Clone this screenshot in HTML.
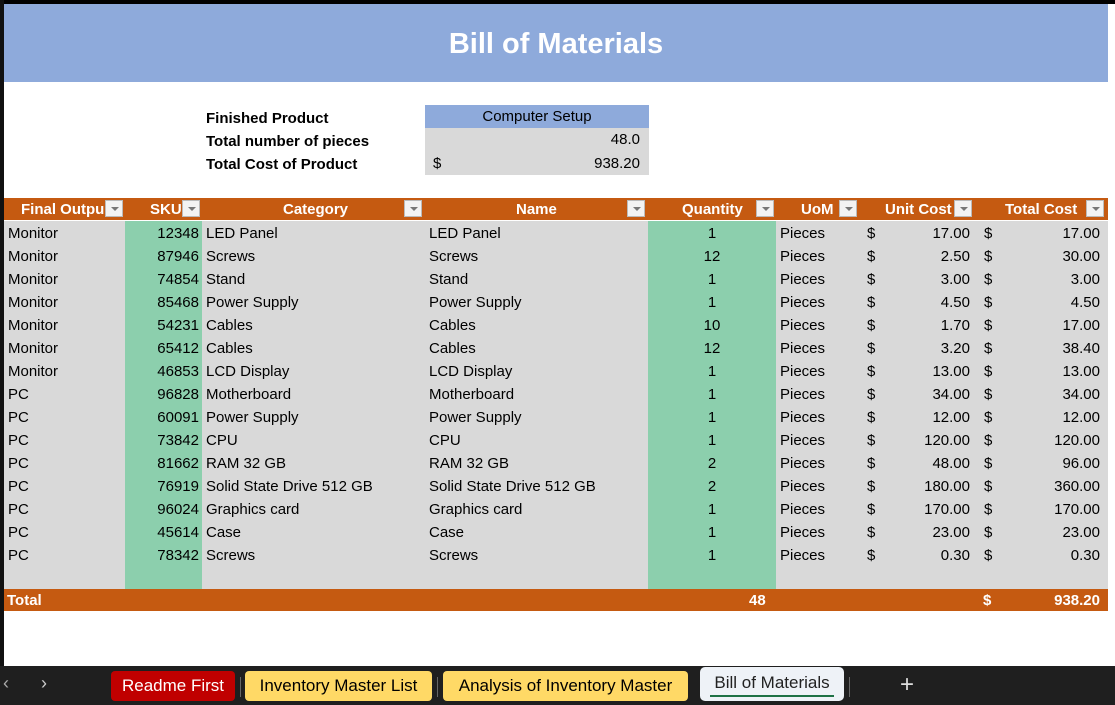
<!DOCTYPE html><html><head><style>
*{margin:0;padding:0;box-sizing:border-box}
body{width:1115px;height:705px;background:#fff;font-family:"Liberation Sans",sans-serif;position:relative;overflow:hidden;font-size:15px;color:#000}
.a{position:absolute}
.hdr{top:198px;height:22px;background:#c55a11;color:#fff;font-weight:bold;line-height:23px}
.dd{position:absolute;top:2px;width:18px;height:17px;background:#f3f3f3;border:1px solid #bbb}
.dd:after{content:"";position:absolute;left:5px;top:6px;border-left:4px solid transparent;border-right:4px solid transparent;border-top:4px solid #777}
.row{position:absolute;left:4px;width:1104px;height:23px;line-height:25px}
.c{position:absolute;top:0;white-space:nowrap}
.tab{position:absolute;top:671px;height:30px;line-height:30px;font-size:17px;text-align:center;border-radius:4px}
</style></head><body>
<div class="a" style="left:0;top:0;width:1115px;height:4px;background:#000"></div>
<div class="a" style="left:0;top:0;width:4px;height:666px;background:#111"></div>
<div class="a" style="left:4px;top:4px;width:1104px;height:78px;background:#8eaadb;color:#fff;font-weight:bold;font-size:29px;text-align:center;line-height:80px">Bill of Materials</div>
<div class="a" style="left:206px;top:107px;font-weight:bold;line-height:23px">Finished Product<br>Total number of pieces<br>Total Cost of Product</div>
<div class="a" style="left:425px;top:105px;width:224px;height:23px;background:#8eaadb;text-align:center;line-height:24px">Computer Setup</div>
<div class="a" style="left:425px;top:128px;width:224px;height:47px;background:#d9d9d9;line-height:24px">
<div style="text-align:right;padding-right:9px">48.0</div>
<div style="text-align:right;padding-right:9px;position:relative"><span style="position:absolute;left:8px">$</span>938.20</div></div>
<div class="a" style="left:4px;top:221px;width:1104px;height:368px;background:#d9d9d9"></div>
<div class="a" style="left:125px;top:221px;width:77px;height:368px;background:#8ccfad"></div>
<div class="a" style="left:648px;top:221px;width:128px;height:368px;background:#8ccfad"></div>
<div class="a hdr" style="left:4px;width:1104px">
<span class="c" style="left:17px">Final Outpu</span><span class="dd" style="left:101px"></span>
<span class="c" style="left:146px">SKU</span><span class="dd" style="left:178px"></span>
<span class="c" style="left:279px">Category</span><span class="dd" style="left:400px"></span>
<span class="c" style="left:512px">Name</span><span class="dd" style="left:623px"></span>
<span class="c" style="left:678px">Quantity</span><span class="dd" style="left:752px"></span>
<span class="c" style="left:797px">UoM</span><span class="dd" style="left:835px"></span>
<span class="c" style="left:881px">Unit Cost</span><span class="dd" style="left:950px"></span>
<span class="c" style="left:1001px">Total Cost</span><span class="dd" style="left:1082px"></span>
</div>
<div id="rows"></div>
<div class="a" style="left:4px;top:589px;width:1104px;height:22px;background:#c55a11;color:#fff;font-weight:bold;line-height:23px">
<span class="c" style="left:3px">Total</span><span class="c" style="left:745px">48</span><span class="c" style="left:979px">$</span><span class="c" style="right:8px">938.20</span></div>
<div class="a" style="left:0;top:666px;width:1115px;height:39px;background:#1f1f1f"></div>
<div class="a" style="left:3px;top:673px;color:#aaa;font-size:18px">&lsaquo;</div>
<div class="a" style="left:41px;top:673px;color:#ccc;font-size:18px">&rsaquo;</div>
<div class="tab" style="left:111px;width:124px;background:#c00000;color:#fff">Readme First</div>
<div class="a" style="left:240px;top:677px;width:1px;height:20px;background:#666"></div>
<div class="tab" style="left:245px;width:187px;background:#ffd966">Inventory Master List</div>
<div class="a" style="left:437px;top:677px;width:1px;height:20px;background:#666"></div>
<div class="tab" style="left:443px;width:245px;background:#ffd966">Analysis of Inventory Master</div>
<div class="a" style="left:700px;top:667px;width:144px;height:34px;background:#eef2f7;border-radius:5px;font-size:17px;line-height:32px;text-align:center;color:#222">Bill of Materials</div>
<div class="a" style="left:710px;top:695px;width:124px;height:2px;background:#1e7145"></div>
<div class="a" style="left:849px;top:677px;width:1px;height:20px;background:#666"></div>
<div class="a" style="left:900px;top:671px;color:#ddd;font-size:24px">+</div>
<script>
var d=[["Monitor",12348,"LED Panel",1,"17.00","17.00"],["Monitor",87946,"Screws",12,"2.50","30.00"],["Monitor",74854,"Stand",1,"3.00","3.00"],["Monitor",85468,"Power Supply",1,"4.50","4.50"],["Monitor",54231,"Cables",10,"1.70","17.00"],["Monitor",65412,"Cables",12,"3.20","38.40"],["Monitor",46853,"LCD Display",1,"13.00","13.00"],["PC",96828,"Motherboard",1,"34.00","34.00"],["PC",60091,"Power Supply",1,"12.00","12.00"],["PC",73842,"CPU",1,"120.00","120.00"],["PC",81662,"RAM 32 GB",2,"48.00","96.00"],["PC",76919,"Solid State Drive 512 GB",2,"180.00","360.00"],["PC",96024,"Graphics card",1,"170.00","170.00"],["PC",45614,"Case",1,"23.00","23.00"],["PC",78342,"Screws",1,"0.30","0.30"]];
var h="";d.forEach(function(r,i){h+='<div class="row" style="top:'+(221+23*i)+'px"><span class="c" style="left:4px">'+r[0]+'</span><span class="c" style="right:909px">'+r[1]+'</span><span class="c" style="left:202px">'+r[2]+'</span><span class="c" style="left:425px">'+r[2]+'</span><span class="c" style="left:644px;width:128px;text-align:center">'+r[3]+'</span><span class="c" style="left:776px">Pieces</span><span class="c" style="left:863px">$</span><span class="c" style="right:138px">'+r[4]+'</span><span class="c" style="left:980px">$</span><span class="c" style="right:8px">'+r[5]+'</span></div>'});
document.getElementById("rows").innerHTML=h;
</script>
</body></html>
